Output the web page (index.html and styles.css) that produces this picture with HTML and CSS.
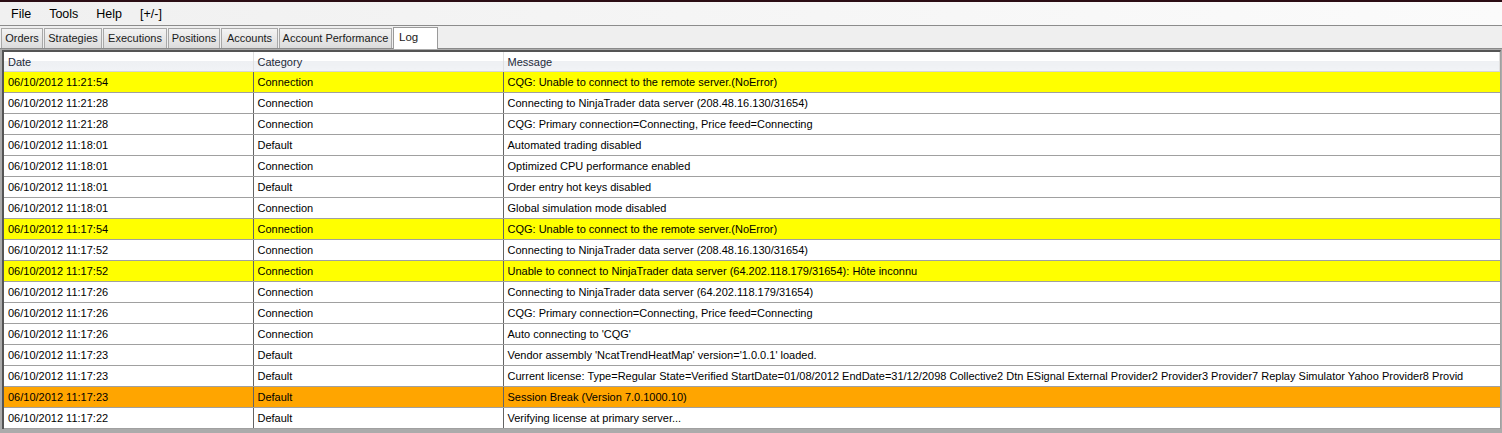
FILE: index.html
```html
<!DOCTYPE html>
<html lang="en">
<head>
    <meta charset="UTF-8">
    <title>Log</title>
    <link rel="stylesheet" href="styles.css">
</head>
<body>
    <div class="window-top"></div>

    <!-- Menu -->
    <div class="menu-bar">
        <span class="menu-item">File</span>
        <span class="menu-item">Tools</span>
        <span class="menu-item">Help</span>
        <span class="menu-item">[+/-]</span>
    </div>

    <!-- Tabs -->
    <div class="tab-strip">
        <div class="tab w-orders">Orders</div>
        <div class="tab w-strategies">Strategies</div>
        <div class="tab w-executions">Executions</div>
        <div class="tab w-positions">Positions</div>
        <div class="tab w-accounts">Accounts</div>
        <div class="tab w-perf">Account Performance</div>
        <div class="tab tab-active w-log">Log</div>
    </div>

    <!-- Log grid -->
    <div class="grid-wrap">
        <table class="log-grid">
            <colgroup>
                <col class="col-date">
                <col class="col-cat">
                <col>
            </colgroup>
            <thead>
                <tr>
                    <th>Date</th>
                    <th>Category</th>
                    <th>Message</th>
                </tr>
            </thead>
            <tbody>
                <tr class="warn"><td>06/10/2012 11:21:54</td><td>Connection</td><td>CQG: Unable to connect to the remote server.(NoError)</td></tr>
                <tr><td>06/10/2012 11:21:28</td><td>Connection</td><td>Connecting to NinjaTrader data server (208.48.16.130/31654)</td></tr>
                <tr><td>06/10/2012 11:21:28</td><td>Connection</td><td>CQG: Primary connection=Connecting, Price feed=Connecting</td></tr>
                <tr><td>06/10/2012 11:18:01</td><td>Default</td><td>Automated trading disabled</td></tr>
                <tr><td>06/10/2012 11:18:01</td><td>Connection</td><td>Optimized CPU performance enabled</td></tr>
                <tr><td>06/10/2012 11:18:01</td><td>Default</td><td>Order entry hot keys disabled</td></tr>
                <tr><td>06/10/2012 11:18:01</td><td>Connection</td><td>Global simulation mode disabled</td></tr>
                <tr class="warn"><td>06/10/2012 11:17:54</td><td>Connection</td><td>CQG: Unable to connect to the remote server.(NoError)</td></tr>
                <tr><td>06/10/2012 11:17:52</td><td>Connection</td><td>Connecting to NinjaTrader data server (208.48.16.130/31654)</td></tr>
                <tr class="warn"><td>06/10/2012 11:17:52</td><td>Connection</td><td>Unable to connect to NinjaTrader data server (64.202.118.179/31654): Hôte inconnu</td></tr>
                <tr><td>06/10/2012 11:17:26</td><td>Connection</td><td>Connecting to NinjaTrader data server (64.202.118.179/31654)</td></tr>
                <tr><td>06/10/2012 11:17:26</td><td>Connection</td><td>CQG: Primary connection=Connecting, Price feed=Connecting</td></tr>
                <tr><td>06/10/2012 11:17:26</td><td>Connection</td><td>Auto connecting to 'CQG'</td></tr>
                <tr><td>06/10/2012 11:17:23</td><td>Default</td><td>Vendor assembly 'NcatTrendHeatMap' version='1.0.0.1' loaded.</td></tr>
                <tr><td>06/10/2012 11:17:23</td><td>Default</td><td>Current license: Type=Regular State=Verified StartDate=01/08/2012 EndDate=31/12/2098 Collective2 Dtn ESignal External Provider2 Provider3 Provider7 Replay Simulator Yahoo Provider8 Provid</td></tr>
                <tr class="session"><td>06/10/2012 11:17:23</td><td>Default</td><td>Session Break (Version 7.0.1000.10)</td></tr>
                <tr><td>06/10/2012 11:17:22</td><td>Default</td><td>Verifying license at primary server...</td></tr>
            </tbody>
        </table>
    </div>
</body>
</html>
```

FILE: styles.css
```css
/* Base */
body {
    margin: 0;
    padding: 0;
    font-family: "Liberation Sans", Arial, sans-serif;
    font-size: 11px;
    color: #000;
    background-color: #ababab;
    overflow: hidden;
}

.window-top {
    height: 2px;
    background-color: #2b0d14;
}

/* Menu */
.menu-bar {
    height: 23px;
    display: flex;
    align-items: center;
    padding-left: 4px;
    background: linear-gradient(to right, #f0f0f0, #fbfbfb);
    border-bottom: 1px solid #8c8c8c;
    font-size: 12.5px;
}

.menu-item {
    padding: 0 7px;
    margin-right: 4px;
}

/* Tabs */
.tab-strip {
    height: 22px;
    display: flex;
    align-items: flex-end;
    background-color: #efefef;
    border-bottom: 1px solid #8a8a8a;
    padding-left: 1px;
}

.tab {
    box-sizing: border-box;
    height: 20px;
    line-height: 18px;
    text-align: center;
    background: linear-gradient(#f3f3f3, #dcdcdc);
    border: 1px solid #a8a8a8;
    border-bottom: none;
    margin-right: 1px;
    color: #1a1a1a;
}

.tab-active {
    height: 22px;
    line-height: 18px;
    margin-bottom: -1px;
    background: #fff;
    border-color: #9a9a9a;
    padding-left: 5px;
    text-align: left;
    font-size: 11.5px;
}

.w-orders { width: 42px; }
.w-strategies { width: 58px; }
.w-executions { width: 64px; }
.w-positions { width: 52px; }
.w-accounts { width: 57px; }
.w-perf { width: 113px; }
.w-log { width: 45px; }

/* Grid */
.grid-wrap {
    margin: 1px 1px 0 2px;
    border-top: 2px solid #555;
    border-left: 2px solid #555;
    border-right: 1px solid #a0a0a0;
    background-color: #fff;
}

.log-grid {
    width: 100%;
    table-layout: fixed;
    border-collapse: collapse;
}

.col-date { width: 249px; }
.col-cat { width: 250px; }

.log-grid th {
    height: 19px;
    padding: 0 4px;
    text-align: left;
    font-weight: normal;
    color: #1e2a3a;
    background: linear-gradient(#ffffff 0%, #ffffff 45%, #eef0f3 50%, #f1f3f6 100%);
    border-bottom: 1px solid #d5d5d5;
    border-right: 1px solid #e0e0e0;
}

.log-grid td {
    height: 20px;
    padding: 0 4px;
    white-space: nowrap;
    overflow: hidden;
    border-bottom: 1px solid #a0a0a0;
    border-right: 1px solid #646464;
}

.log-grid td:last-child {
    border-right: none;
}

.warn td {
    background-color: #ffff00;
}

.session td {
    background-color: #ffa500;
}
```
